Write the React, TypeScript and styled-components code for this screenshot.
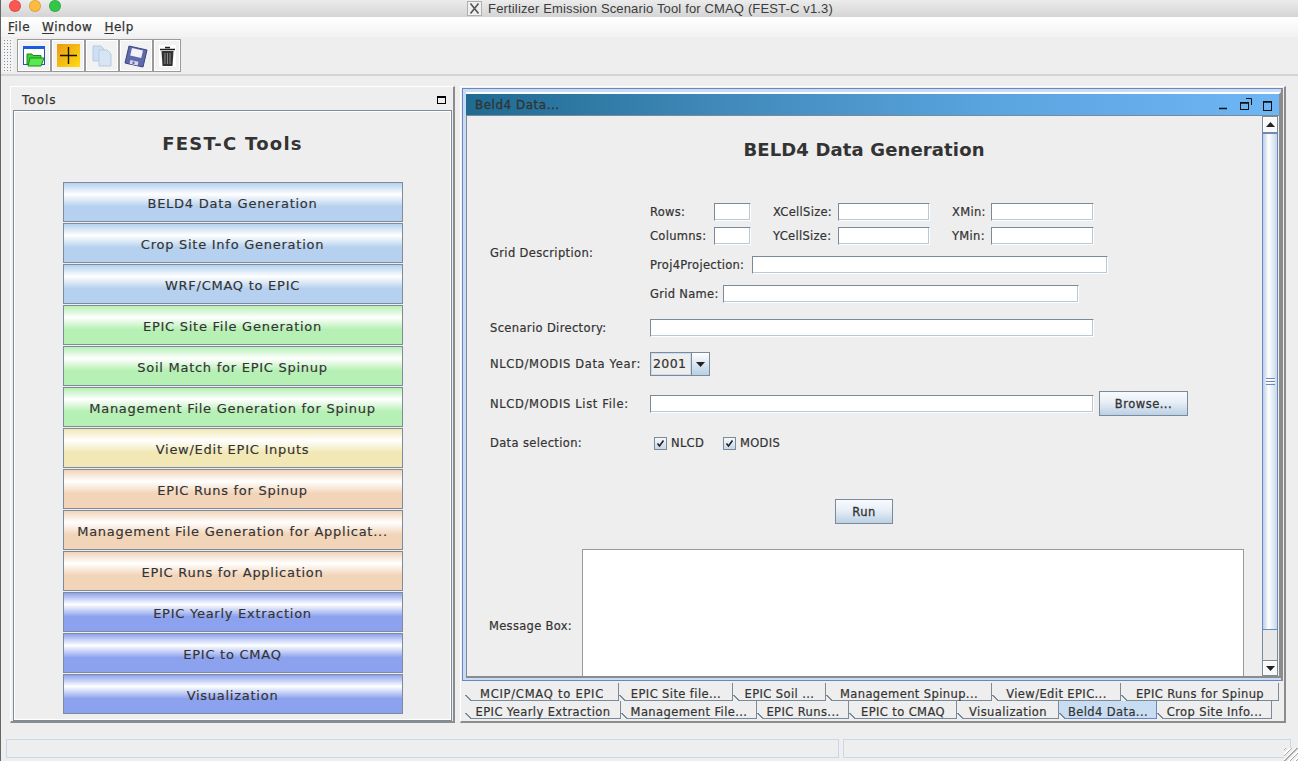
import React from 'react'
import styled, { createGlobalStyle } from 'styled-components'

const GlobalStyle = createGlobalStyle`
  html, body {
    margin: 0;
    padding: 0;
    background: #eeeeee;
  }
  * {
    box-sizing: border-box;
  }
`

const Window = styled.div`
  position: relative;
  width: 1298px;
  height: 761px;
  overflow: hidden;
  display: flex;
  flex-direction: column;
  background: #eeeeee;
  color: #333333;
  font-family: 'DejaVu Sans', sans-serif;
  font-size: 12px;
  border-left: 1px solid #666;
`

const TitleBar = styled.div`
  position: relative;
  height: 17px;
  flex: none;
  display: flex;
  align-items: center;
  justify-content: center;
  gap: 6px;
  padding-left: 1px;
  background: linear-gradient(#ececec, #d4d4d4);
  font-family: 'Liberation Sans', sans-serif;
  font-size: 13px;
  letter-spacing: 0.15px;
  color: #3c3c3c;
`

const Lights = styled.div`
  position: absolute;
  left: 8px;
  top: 0;
  height: 12px;
  display: flex;
  gap: 8px;
`

const Light = styled.span<{ $color: string }>`
  width: 12px;
  height: 12px;
  border-radius: 50%;
  background: ${(props) => props.$color};
  border: 1px solid rgba(0, 0, 0, 0.12);
`

const MenuBar = styled.div`
  height: 20px;
  flex: none;
  display: flex;
  align-items: center;
  gap: 12px;
  padding: 0 0 0 7px;
  background: linear-gradient(#ffffff, #f2f2f2);
  font-size: 12px;
  letter-spacing: 0.5px;
  -webkit-text-stroke: 0.25px #333;
`

const MenuKey = styled.u`
  text-underline-offset: 2px;
`

const ToolBar = styled.div`
  height: 39px;
  flex: none;
  display: flex;
  align-items: center;
  padding: 0 0 0 2px;
  background: #eeeeee;
  border-bottom: 2px solid #d4d4d4;
`

const Gripper = styled.div`
  width: 10px;
  height: 33px;
  margin-right: 4px;
  background-color: #f4f4f4;
  background-image: radial-gradient(#7f8ea0 0.8px, transparent 1px);
  background-size: 3px 3px;
`

const ToolButton = styled.div<{ $w: number }>`
  width: ${(props) => props.$w}px;
  height: 33px;
  display: flex;
  align-items: center;
  justify-content: center;
  background: #f2f2f2;
  border: 1px solid #9a9a9a;
  box-shadow: inset 0 0 0 1px #ffffff;
`

const Main = styled.div`
  height: 647px;
  flex: none;
  display: flex;
  padding: 10px 0 0 9px;
`

const ToolsPanel = styled.section`
  width: 445px;
  height: 637px;
  flex: none;
  display: flex;
  flex-direction: column;
  padding: 2px 1px 0 2px;
  border-top: 1px solid #ffffff;
  border-left: 1px solid #ffffff;
  border-right: 2px solid #8c8c8c;
  border-bottom: 2px solid #8c8c8c;
`

const PanelHead = styled.div`
  height: 21px;
  flex: none;
  display: flex;
  align-items: center;
  justify-content: space-between;
  padding: 0 6px 0 9px;
  font-size: 12px;
  letter-spacing: 1px;
  -webkit-text-stroke: 0.25px #333;
`

const PanelIcon = styled.span`
  width: 9px;
  height: 8px;
  border: 1px solid #000;
  border-top-width: 2px;
`

const PanelBody = styled.div`
  flex: 1;
  display: flex;
  flex-direction: column;
  align-items: center;
  border: 1px solid #7d8b9b;
  outline: 1px solid #ffffff;
  outline-offset: -2px;
`

const PanelTitle = styled.h1`
  margin: 21px 0 26px;
  height: 24px;
  line-height: 24px;
  font-size: 18px;
  font-weight: 700;
  letter-spacing: 1.25px;
  color: #333;
`

const ButtonStack = styled.div`
  display: flex;
  flex-direction: column;
  gap: 1px;
`

const ToolItem = styled.div<{ $color: string }>`
  width: 340px;
  height: 40px;
  padding-top: 2px;
  display: flex;
  align-items: center;
  justify-content: center;
  border: 1px solid #7d8b9b;
  background: linear-gradient(
    ${(props) => props.$color} 0%,
    #ffffff 30%,
    ${(props) => props.$color} 62%,
    ${(props) => props.$color} 100%
  );
  font-size: 13px;
  letter-spacing: 0.74px;
  white-space: nowrap;
  -webkit-text-stroke: 0.15px #333;
`

const Divider = styled.div`
  width: 4px;
  flex: none;
  margin-left: 1px;
  background: #eeeeee;
`

const DeskPane = styled.section`
  width: 826px;
  height: 637px;
  flex: none;
  display: flex;
  flex-direction: column;
  border-top: 1px solid #ffffff;
  border-left: 1px solid #ffffff;
  border-right: 2px solid #8c8c8c;
  border-bottom: 2px solid #8c8c8c;
  padding: 1px 0 0 1px;
`

const FrameOuter = styled.div`
  height: 593px;
  flex: none;
  width: 821px;
  display: flex;
  flex-direction: column;
  border: 1px solid #6a86c4;
  border-right: 2px solid #8c8c8c;
  background: #c8dcf2;
  padding: 3px 2px 0 3px;
`

const FrameInner = styled.div`
  flex: 1;
  min-height: 0;
  display: flex;
  flex-direction: column;
  border-top: 2px solid #ffffff;
  margin: 0 0 2px;
  width: 815px;
  background: #eeeeee;
  border-bottom: 2px solid #8c8c8c;
  border-right: 2px solid #8c8c8c;
`

const FrameTitle = styled.div`
  height: 22px;
  flex: none;
  display: flex;
  align-items: center;
  justify-content: space-between;
  padding: 0 6px 0 9px;
  background: linear-gradient(90deg, #1f6b92 0%, #3f88b8 30%, #5aa4e0 65%, #6fb6f4 100%);
  border-bottom: 1px solid #7a8a99;
  font-size: 12px;
  letter-spacing: 0.5px;
  color: #333;
  -webkit-text-stroke: 0.3px #333;
`

const FrameControls = styled.div`
  display: flex;
  align-items: center;
`

const FrameContent = styled.div`
  flex: 1;
  min-height: 0;
  display: flex;
`

const Form = styled.div`
  flex: 1;
  min-width: 0;
  overflow: hidden;
  padding: 22px 0 0 23px;
  border-left: 1px solid #7a8a99;
`

const FormHeading = styled.h2`
  width: 794px;
  margin: 0 0 41px -23px;
  height: 24px;
  line-height: 24px;
  text-align: center;
  font-size: 18px;
  font-weight: 700;
  letter-spacing: 0.14px;
  color: #333;
`

const FormRow = styled.div<{ $mt?: number; $h?: number }>`
  display: flex;
  align-items: center;
  margin-top: ${(props) => props.$mt ?? 0}px;
  height: ${(props) => (props.$h ? `${props.$h}px` : 'auto')};
  font-size: 11.5px;
  letter-spacing: 0.3px;
  white-space: nowrap;
`

const RowLabel = styled.span<{ $wide?: boolean }>`
  width: 160px;
  flex: none;
  letter-spacing: ${(props) => (props.$wide ? '0.66px' : '0.36px')};
  -webkit-text-stroke: 0.2px #333;
`

const GridFields = styled.div`
  display: flex;
  flex-direction: column;
`

const FieldLabel = styled.span<{ $w: number }>`
  width: ${(props) => props.$w}px;
  flex: none;
  -webkit-text-stroke: 0.2px #333;
`

const Input = styled.div<{ $w: number; $mr?: number }>`
  width: ${(props) => props.$w}px;
  height: 18px;
  flex: none;
  margin-right: ${(props) => props.$mr ?? 0}px;
  background: #ffffff;
  border: 1px solid #ffffff;
  border-top-color: #7a8a99;
  border-left-color: #7a8a99;
  box-shadow: inset -1px -1px 0 #b8c8d8;
`

const Combo = styled.div`
  width: 60px;
  height: 24px;
  display: flex;
  border: 1px solid #7a8a99;
`

const ComboValue = styled.div`
  width: 40px;
  display: flex;
  align-items: center;
  padding: 0 0 1px 1px;
  border: 1px solid #c8dcf2;
  background: #eeeeee;
  font-size: 12.5px;
  letter-spacing: 0.4px;
  -webkit-text-stroke: 0.2px #333;
`

const ComboArrow = styled.div`
  flex: 1;
  display: flex;
  align-items: center;
  justify-content: center;
  border-left: 1px solid #7a8a99;
  background: linear-gradient(#ffffff, #b8cfe5);
`

const PushButton = styled.div<{ $w: number; $ml?: number }>`
  width: ${(props) => props.$w}px;
  height: 25px;
  margin-left: ${(props) => props.$ml ?? 0}px;
  display: flex;
  align-items: center;
  justify-content: center;
  border: 1px solid #7a8a99;
  background: linear-gradient(#f8fbfe, #e6eef6 45%, #bcd0e5);
  font-size: 11.5px;
  letter-spacing: 0.5px;
  -webkit-text-stroke: 0.3px #333;
`

const Check = styled.span<{ $ml: number }>`
  width: 13px;
  height: 13px;
  margin: 0 4px 0 ${(props) => props.$ml}px;
  display: flex;
  align-items: center;
  justify-content: center;
  border: 1px solid #7a8a99;
  background: linear-gradient(#f6f9fc, #c4d6e8);
`

const RunRow = styled.div`
  width: 794px;
  margin: 48px 0 0 -23px;
  display: flex;
  justify-content: center;
`

const MessageRow = styled.div`
  display: flex;
  align-items: flex-start;
  margin-top: 25px;
  font-size: 11.5px;
  letter-spacing: 0.3px;
`

const MessageLabel = styled.span`
  width: 93px;
  flex: none;
  margin: 70px 0 0 -1px;
  -webkit-text-stroke: 0.2px #333;
`

const MessageArea = styled.div`
  width: 662px;
  height: 140px;
  flex: none;
  background: #ffffff;
  border: 1px solid #9a9a9a;
`

const ScrollBar = styled.div`
  width: 16px;
  flex: none;
  margin-right: 1px;
  display: flex;
  flex-direction: column;
  background: #eeeeee;
`

const ScrollButton = styled.div<{ $h: number }>`
  height: ${(props) => props.$h}px;
  flex: none;
  display: flex;
  align-items: center;
  justify-content: center;
  background: #f8f8f8;
  border: 1px solid #7a8a99;
  box-shadow: inset 1px 1px 0 #ffffff;
`

const ScrollThumb = styled.div`
  height: 497px;
  flex: none;
  display: flex;
  align-items: center;
  justify-content: center;
  border: 1px solid #6a86c4;
  background: linear-gradient(90deg, #b8cfe5, #ffffff 40%, #c6d8ea);
`

const ScrollTrack = styled.div`
  flex: 1;
  border-left: 1px solid #7a8a99;
  border-right: 1px solid #7a8a99;
  background: #e8e8e8;
`

const GripLines = styled.span`
  width: 9px;
  height: 7px;
  background: repeating-linear-gradient(#6a86c4 0 1px, #ffffff 1px 2px, transparent 2px 3px);
`

const TabRows = styled.div`
  display: flex;
  flex-direction: column;
  padding: 2px 0 0 3px;
`

const TabRow = styled.div`
  display: flex;
  height: 18px;
`

const Tab = styled.div<{ $w: number; $active?: boolean; $ls?: number }>`
  position: relative;
  width: ${(props) => props.$w}px;
  flex: none;
  display: flex;
  align-items: center;
  justify-content: center;
  padding: 5px 0 0 1px;
  background: ${(props) => (props.$active ? '#c8dcf2' : '#eeeeee')};
  border-right: 1px solid ${(props) => (props.$active ? '#6a86c4' : '#7a8a99')};
  border-bottom: 1px solid ${(props) => (props.$active ? '#6a86c4' : '#7a8a99')};
  font-size: 11.5px;
  letter-spacing: ${(props) => props.$ls ?? 0.4}px;
  white-space: nowrap;
  -webkit-text-stroke: 0.2px #333;

  &::before {
    content: '';
    position: absolute;
    left: 0;
    bottom: -1px;
    width: 6px;
    height: 6px;
    background: linear-gradient(45deg, #eeeeee 45%, #7a8a99 45% 60%, transparent 60%);
  }
`

const StatusBar = styled.div`
  flex: 1;
  display: flex;
  gap: 4px;
  padding: 16px 0 0 5px;
  align-items: flex-start;
`

const StatusCell = styled.div<{ $w: number }>`
  width: ${(props) => props.$w}px;
  height: 19px;
  border: 1px solid #c8d8e8;
`

const ResizeGrip = styled.div`
  position: absolute;
  right: 0;
  bottom: 0;
  width: 14px;
  height: 13px;
  background: repeating-linear-gradient(135deg, #ffffff 0 1px, #a8a8a8 1px 2px, #eeeeee 2px 4px);
`

const FrameIcon = styled.svg`
  display: block;
`

const OpenIcon = () => (
  <svg width="24" height="24" viewBox="0 0 24 24">
    <rect x="1.5" y="2.5" width="21" height="18" fill="#fff" stroke="#2a4fb0" />
    <rect x="1" y="2" width="22" height="3" fill="#1c5ce0" />
    <path d="M5 10h5l1 1.5h8v9H5z" fill="#3fd13a" stroke="#1e8a1c" />
    <path d="M6 22l2-8h14l-3 8z" fill="#58e84f" stroke="#1e8a1c" />
  </svg>
)

const AddIcon = () => (
  <svg width="23" height="23" viewBox="0 0 23 23">
    <defs>
      <linearGradient id="addFill" x1="0" y1="0" x2="1" y2="1">
        <stop offset="0" stopColor="#eb9a12" />
        <stop offset="1" stopColor="#ffdc14" />
      </linearGradient>
    </defs>
    <rect width="23" height="23" fill="url(#addFill)" />
    <path d="M11.5 3v17M3 11.5h17" stroke="#1a1200" strokeWidth="1.4" />
  </svg>
)

const CopyIcon = () => (
  <svg width="22" height="22" viewBox="0 0 22 22">
    <path d="M2 1h8l3 3v12H2z" fill="#cfdff2" stroke="#b7cbe4" />
    <path d="M8 5h8l4 4v12H8z" fill="#d6e4f4" stroke="#b7cbe4" />
  </svg>
)

const SaveIcon = () => (
  <svg width="24" height="24" viewBox="0 0 24 24">
    <path d="M5 2l18 4-4 17-18-4z" fill="#5f69ab" stroke="#3c447f" />
    <path d="M8 4l11 2.500-1.800 7.500-11-2.500z" fill="#f2f2f8" />
    <path d="M6.500 16l8 1.800-.9 3.700-8-1.800z" fill="#d8daea" />
    <rect x="8.500" y="17.500" width="2" height="2.500" fill="#5f69ab" />
  </svg>
)

const TrashIcon = () => (
  <svg width="17" height="22" viewBox="0 0 17 22">
    <rect width="17" height="22" fill="#ffffff" />
    <path d="M6 2.500h5M1 4.500h15" stroke="#222" strokeWidth="1.600" />
    <path d="M2.500 6h12l-1 15h-10z" fill="#333" />
    <path d="M6 8v11M8.500 8v11M11 8v11" stroke="#8a8a8a" strokeWidth="1" />
  </svg>
)

const tools = [
  { label: 'BELD4 Data Generation', color: '#b5d1ef' },
  { label: 'Crop Site Info Generation', color: '#b5d1ef' },
  { label: 'WRF/CMAQ to EPIC', color: '#b5d1ef' },
  { label: 'EPIC Site File Generation', color: '#b6f0b4' },
  { label: 'Soil Match for EPIC Spinup', color: '#b6f0b4' },
  { label: 'Management File Generation for Spinup', color: '#b6f0b4' },
  { label: 'View/Edit EPIC Inputs', color: '#f2e8b5' },
  { label: 'EPIC Runs for Spinup', color: '#f2d4b8' },
  { label: 'Management File Generation for Applicat...', color: '#f2d4b8' },
  { label: 'EPIC Runs for Application', color: '#f2d4b8' },
  { label: 'EPIC Yearly Extraction', color: '#8da2ee' },
  { label: 'EPIC to CMAQ', color: '#8da2ee' },
  { label: 'Visualization', color: '#8da2ee' },
]

const topTabs = [
  { label: 'MCIP/CMAQ to EPIC', w: 154, ls: 0.75 },
  { label: 'EPIC Site file...', w: 114 },
  { label: 'EPIC Soil ...', w: 93 },
  { label: 'Management Spinup...', w: 166 },
  { label: 'View/Edit EPIC...', w: 129 },
  { label: 'EPIC Runs for Spinup', w: 158 },
]

const bottomTabs = [
  { label: 'EPIC Yearly Extraction', w: 156 },
  { label: 'Management File...', w: 136 },
  { label: 'EPIC Runs...', w: 92 },
  { label: 'EPIC to CMAQ', w: 108 },
  { label: 'Visualization', w: 102 },
  { label: 'Beld4 Data...', w: 98, active: true },
  { label: 'Crop Site Info...', w: 115 },
]

const CheckMark = () => (
  <svg width="9" height="9" viewBox="0 0 9 9">
    <path d="M1.500 4.500l2 2.500L7.500 1.500" fill="none" stroke="#222" strokeWidth="1.600" />
  </svg>
)

const App = () => {
  return (
    <Window>
      <GlobalStyle />
      <TitleBar>
        <Lights>
          <Light $color="#fc5753" />
          <Light $color="#fdbc40" />
          <Light $color="#33c748" />
        </Lights>
        <svg width="15" height="15" viewBox="0 0 15 15">
          <rect x="0.500" y="0.500" width="14" height="14" fill="#f0f0f0" stroke="#b0b0b0" />
          <path d="M3.500 2.500l8 10M11.500 2.500l-8 10" stroke="#555" strokeWidth="1.600" />
        </svg>
        <span>Fertilizer Emission Scenario Tool for CMAQ (FEST-C v1.3)</span>
      </TitleBar>

      <MenuBar>
        <span>
          <MenuKey>F</MenuKey>ile
        </span>
        <span>
          <MenuKey>W</MenuKey>indow
        </span>
        <span>
          <MenuKey>H</MenuKey>elp
        </span>
      </MenuBar>

      <ToolBar>
        <Gripper />
        <ToolButton $w={34}>
          <OpenIcon />
        </ToolButton>
        <ToolButton $w={34}>
          <AddIcon />
        </ToolButton>
        <ToolButton $w={34}>
          <CopyIcon />
        </ToolButton>
        <ToolButton $w={34}>
          <SaveIcon />
        </ToolButton>
        <ToolButton $w={28}>
          <TrashIcon />
        </ToolButton>
      </ToolBar>

      <Main>
        <ToolsPanel>
          <PanelHead>
            <span>Tools</span>
            <PanelIcon />
          </PanelHead>
          <PanelBody>
            <PanelTitle>FEST-C Tools</PanelTitle>
            <ButtonStack>
              {tools.map((item) => (
                <ToolItem key={item.label} $color={item.color}>
                  {item.label}
                </ToolItem>
              ))}
            </ButtonStack>
          </PanelBody>
        </ToolsPanel>

        <Divider />

        <DeskPane>
          <FrameOuter>
            <FrameInner>
              <FrameTitle>
                <span>Beld4 Data...</span>
                <FrameControls>
                  <FrameIcon width="54" height="14" viewBox="0 0 54 14">
                    <path d="M0 10.500h8" stroke="#111" strokeWidth="1.500" />
                    <rect x="21.500" y="4.500" width="8" height="7" fill="none" stroke="#111" />
                    <path d="M21 5h9" stroke="#111" strokeWidth="1.500" />
                    <path d="M27 0.500h5.500V7" fill="none" stroke="#111" />
                    <rect x="44.500" y="3.500" width="8" height="9" fill="none" stroke="#111" />
                    <path d="M44 4h9" stroke="#111" strokeWidth="1.500" />
                  </FrameIcon>
                </FrameControls>
              </FrameTitle>
              <FrameContent>
                <Form>
                  <FormHeading>BELD4 Data Generation</FormHeading>
                  <FormRow>
                    <RowLabel>Grid Description:</RowLabel>
                    <GridFields>
                      <FormRow>
                        <FieldLabel $w={64}>Rows:</FieldLabel>
                        <Input $w={37} $mr={22} />
                        <FieldLabel $w={65}>XCellSize:</FieldLabel>
                        <Input $w={92} $mr={22} />
                        <FieldLabel $w={39}>XMin:</FieldLabel>
                        <Input $w={103} />
                      </FormRow>
                      <FormRow $mt={6}>
                        <FieldLabel $w={64}>Columns:</FieldLabel>
                        <Input $w={37} $mr={22} />
                        <FieldLabel $w={65}>YCellSize:</FieldLabel>
                        <Input $w={92} $mr={22} />
                        <FieldLabel $w={39}>YMin:</FieldLabel>
                        <Input $w={103} />
                      </FormRow>
                      <FormRow $mt={11}>
                        <FieldLabel $w={102}>Proj4Projection:</FieldLabel>
                        <Input $w={356} />
                      </FormRow>
                      <FormRow $mt={11}>
                        <FieldLabel $w={73}>Grid Name:</FieldLabel>
                        <Input $w={356} />
                      </FormRow>
                    </GridFields>
                  </FormRow>

                  <FormRow $mt={16}>
                    <RowLabel>Scenario Directory:</RowLabel>
                    <Input $w={444} />
                  </FormRow>

                  <FormRow $mt={15}>
                    <RowLabel $wide>NLCD/MODIS Data Year:</RowLabel>
                    <Combo>
                      <ComboValue>2001</ComboValue>
                      <ComboArrow>
                        <svg width="9" height="5" viewBox="0 0 9 5">
                          <path d="M0 0h9L4.500 5z" fill="#222" />
                        </svg>
                      </ComboArrow>
                    </Combo>
                  </FormRow>

                  <FormRow $mt={15}>
                    <RowLabel $wide>NLCD/MODIS List File:</RowLabel>
                    <Input $w={444} />
                    <PushButton $w={89} $ml={5}>
                      Browse...
                    </PushButton>
                  </FormRow>

                  <FormRow $mt={19} $h={16}>
                    <RowLabel>Data selection:</RowLabel>
                    <Check $ml={4}>
                      <CheckMark />
                    </Check>
                    <FieldLabel $w={52}>NLCD</FieldLabel>
                    <Check $ml={0}>
                      <CheckMark />
                    </Check>
                    <FieldLabel $w={50}>MODIS</FieldLabel>
                  </FormRow>

                  <RunRow>
                    <PushButton $w={58}>Run</PushButton>
                  </RunRow>

                  <MessageRow>
                    <MessageLabel>Message Box:</MessageLabel>
                    <MessageArea />
                  </MessageRow>
                </Form>

                <ScrollBar>
                  <ScrollButton $h={17}>
                    <svg width="9" height="5" viewBox="0 0 9 5">
                      <path d="M0 5h9L4.500 0z" fill="#222" />
                    </svg>
                  </ScrollButton>
                  <ScrollThumb>
                    <GripLines />
                  </ScrollThumb>
                  <ScrollTrack />
                  <ScrollButton $h={16}>
                    <svg width="9" height="5" viewBox="0 0 9 5">
                      <path d="M0 0h9L4.500 5z" fill="#222" />
                    </svg>
                  </ScrollButton>
                </ScrollBar>
              </FrameContent>
            </FrameInner>
          </FrameOuter>

          <TabRows>
            <TabRow>
              {topTabs.map((item) => (
                <Tab key={item.label} $w={item.w} $ls={item.ls}>
                  {item.label}
                </Tab>
              ))}
            </TabRow>
            <TabRow>
              {bottomTabs.map((item) => (
                <Tab key={item.label} $w={item.w} $active={item.active}>
                  {item.label}
                </Tab>
              ))}
            </TabRow>
          </TabRows>
        </DeskPane>
      </Main>

      <StatusBar>
        <StatusCell $w={833} />
        <StatusCell $w={448} />
      </StatusBar>
      <ResizeGrip />
    </Window>
  )
}

export default App
